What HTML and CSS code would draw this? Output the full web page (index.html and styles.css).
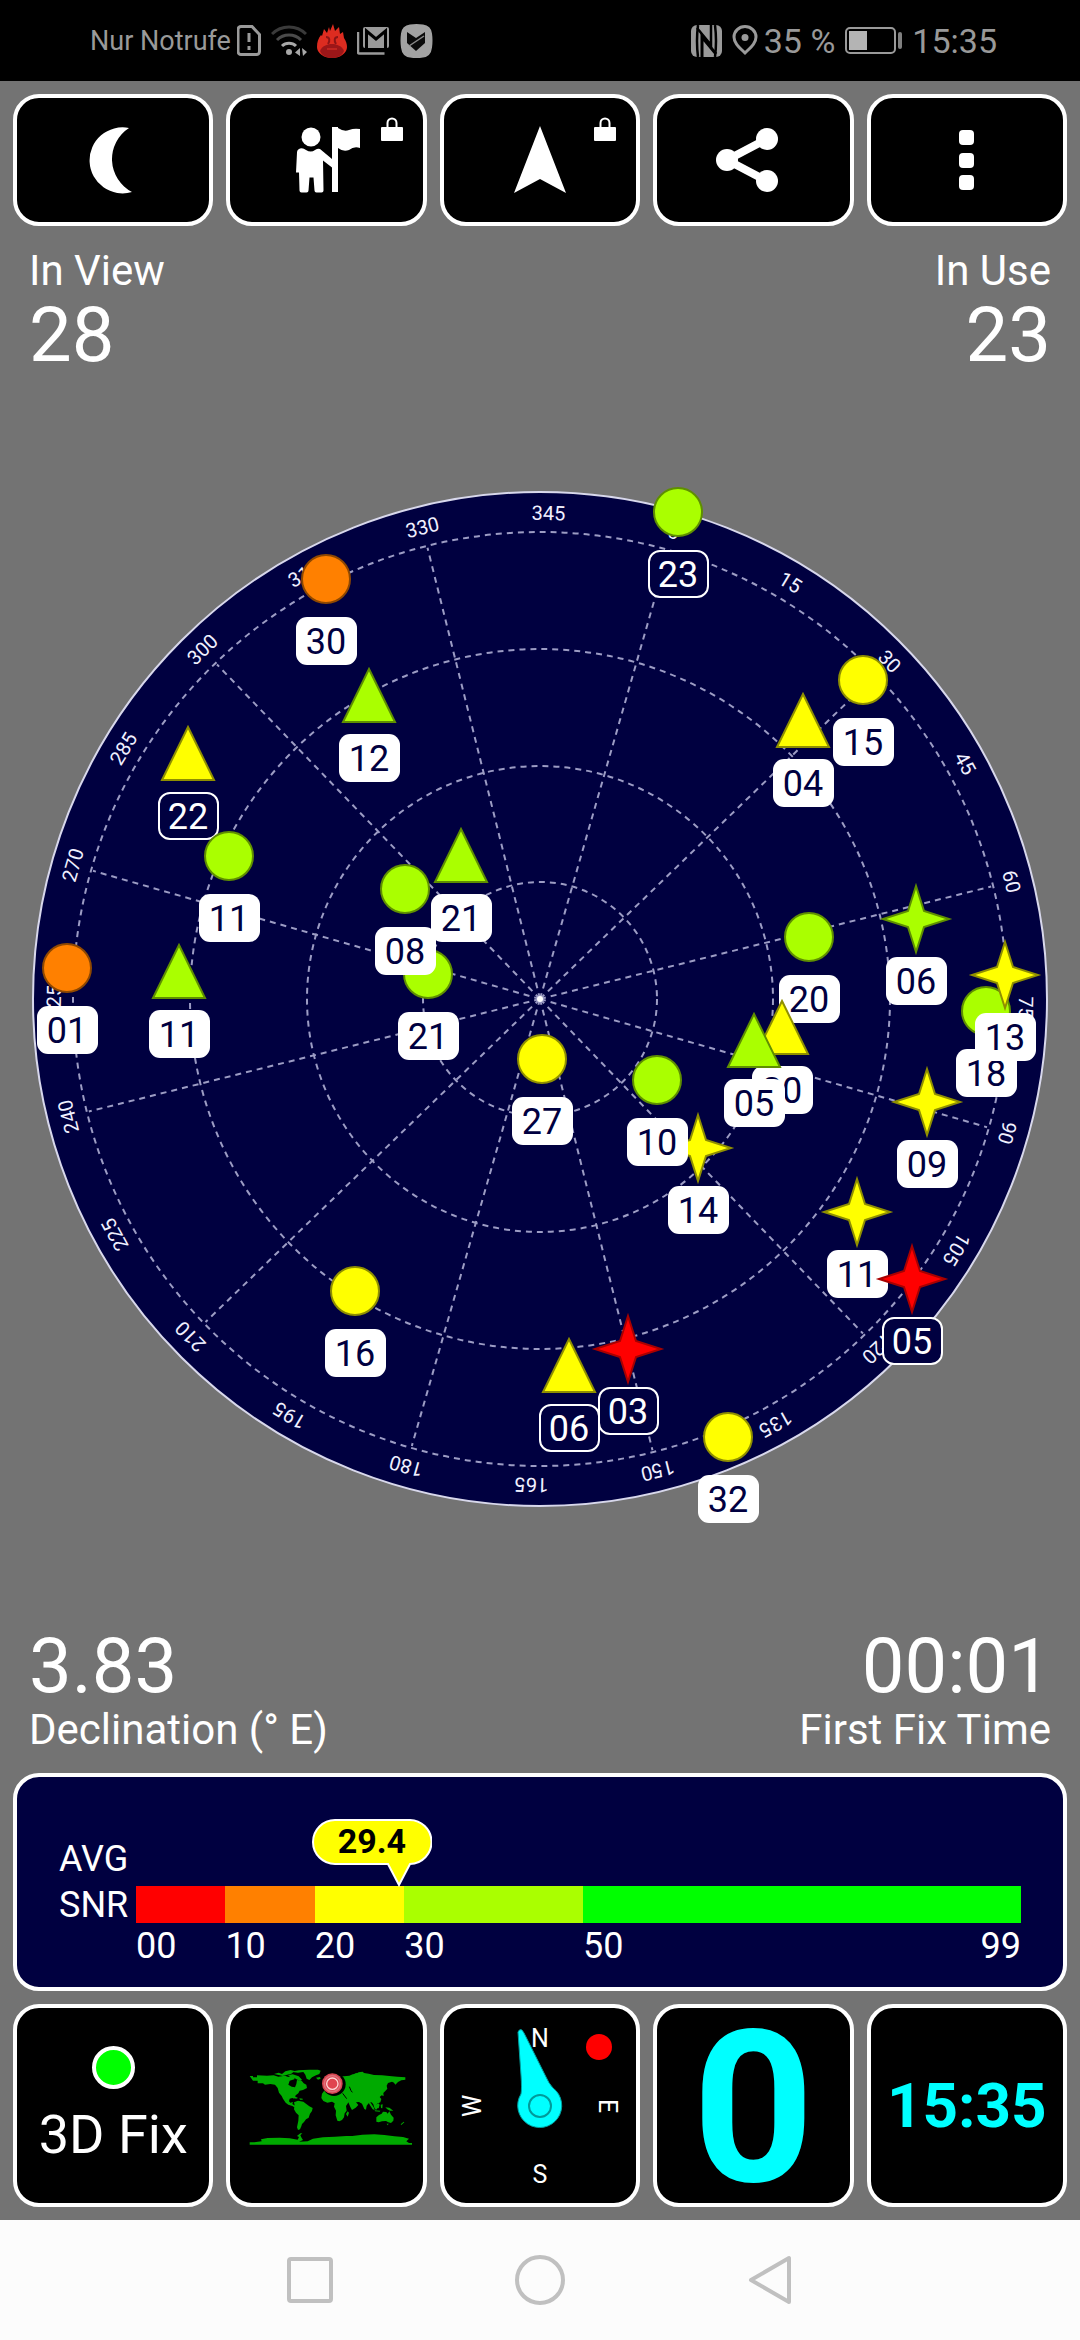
FILE: index.html
```html
<!DOCTYPE html>
<html lang="en">
<head>
<meta charset="utf-8">
<meta name="viewport" content="width=device-width, initial-scale=1">
<title>GPS Satellites</title>
<link rel="stylesheet" href="styles.css">
</head>
<body>
<div class="screen">
  <header class="status">
    <div class="status-side">
      <span class="carrier">Nur Notrufe</span>
      <div class="status-icons">
        <svg width="24" height="31" viewBox="0 0 24 31" fill="none" stroke="#9a9a9a" stroke-width="3"><path d="M4 1.5h11l7.500 8v17a3 3 0 0 1-3 3h-15.500a3 3 0 0 1-3-3v-22a3 3 0 0 1 3-3z"/><path d="M12 8v9M12 21v4"/></svg>
        <svg width="36" height="32" viewBox="0 0 36 32" fill="none" stroke-width="3"><path d="M1 9a24 24 0 0 1 34 0" stroke="#3a3a3a"/><path d="M6 15a17 17 0 0 1 24 0" stroke="#4a4a4a"/><path d="M11 21a10 10 0 0 1 14 0" stroke="#a8a8a8"/><circle cx="18" cy="27" r="3" fill="#a8a8a8"/><path d="M29 23v8l-5-3.500zM31 23l5 4-4 4z" fill="#a8a8a8"/></svg>
        <svg width="30" height="34" viewBox="0 0 30 34"><path d="M4 11l1 1 2-7 3 4 2-6 1 4 3-7 2 7 4-4 1 7 3-2 1 6c2 3 3 6 3 9a15 11 0 0 1-30 0c0-5 1-8 4-12z" fill="#dd2c20"/><path d="M3 27c2-5 7-7 12-7s10 2 12 7c-2 5-7 7-12 7s-10-2-12-7z" fill="#9c1618"/><path d="M9 13c4 0 4 4 2 7M21 13c-4 0-4 4-2 7" fill="none" stroke="#8c1416" stroke-width="2"/><path d="M10 25h10" stroke="#c02420" stroke-width="2"/></svg>
        <svg width="33" height="29" viewBox="0 0 33 29"><path d="M1 6v20a1.500 1.500 0 0 0 1.500 1.500h25" fill="none" stroke="#9a9a9a" stroke-width="2.500"/><rect x="6" y="1" width="26" height="21" rx="2" fill="#9a9a9a"/><path d="M9.500 22v-17l9.500 8 9.500-8v17" fill="none" stroke="#000" stroke-width="3"/></svg>
        <svg width="33" height="34" viewBox="0 0 33 34"><path d="M10 .5q6.500-1 13 0q8 1 9 9q1 7 0 14q-1 9-9 10q-6.500 1-13 0q-8-1-9-10q-1-7 0-14q1-8 9-9z" fill="#a2a2a2"/><path d="M7 8l9 6 9-6v11l-9 8-9-8z" fill="#0a0a0a"/><path d="M9 22l15-10" stroke="#8a8a8a" stroke-width="1.500"/></svg>
      </div>
    </div>
    <div class="status-side">
      <div class="status-icons">
        <svg width="31" height="32" viewBox="0 0 31 32"><rect width="31" height="32" rx="6" fill="#9a9a9a"/><path d="M7 0q-2 16 0 32M24 0q2 16 0 32" fill="none" stroke="#000" stroke-width="2.500"/><path d="M11 32v-20l14 17" fill="none" stroke="#000" stroke-width="3"/><path d="M20 0v20l-14-17" fill="none" stroke="#000" stroke-width="2.500"/></svg>
        <svg width="26" height="31" viewBox="0 0 26 31"><path d="M13 28c-6-6-11-10-11-16a11 10.500 0 0 1 22 0c0 6-5 10-11 16z" fill="none" stroke="#9a9a9a" stroke-width="3"/><circle cx="13" cy="12.500" r="3.500" fill="#9a9a9a"/></svg>
      </div>
      <span class="clock">35 %</span>
      <svg class="battery" width="57" height="27" viewBox="0 0 57 27"><rect x="1" y="1" width="49" height="25" rx="4" fill="none" stroke="#9a9a9a" stroke-width="2"/><rect x="4" y="4" width="18" height="19" fill="#b4b4b4"/><rect x="53" y="5" width="4" height="17" rx="2" fill="#808080"/></svg>
      <span class="clock">15:35</span>
    </div>
  </header>

  <main class="app">
    <nav class="toolbar">
      <button class="tool" type="button" aria-label="Night mode">
        <svg class="tool-icon" viewBox="-7 -7 80 80"><path d="M49 1A33 33 0 1 0 52 65A37 37 0 0 1 49 1z"/></svg>
      </button>
      <button class="tool" type="button" aria-label="Waypoint">
        <svg class="tool-icon" viewBox="-7 -7 80 80"><circle cx="17" cy="10" r="9.500"/><path d="M38 0h6v1q6 4 11 2t11-1v19q-6-2-11 2-6 2-11-2v44h-6z"/><path d="M6 21.500q3-1 6 1.500 5 3 9 0 3-2 5-1l12 10v8.500l-9-7 .500 30q0 2-2 2h-5q-2 0-2-2l-1-13h-4l-1 13q0 2-2 2h-5q-2 0-2-2l-.500-18h-3l1-20q0-3 3-4z"/></svg>
        <svg class="lock" viewBox="0 0 22 24"><rect y="10" width="22" height="14" rx="1"/><path d="M6.500 11v-5a4.500 4.500 0 0 1 9 0v5" fill="none" stroke="#fff" stroke-width="2"/></svg>
      </button>
      <button class="tool" type="button" aria-label="Navigate">
        <svg class="tool-icon" viewBox="-7 -7 80 80"><path d="M33-1L59 66L33 52L7 66z"/></svg>
        <svg class="lock" viewBox="0 0 22 24"><rect y="10" width="22" height="14" rx="1"/><path d="M6.500 11v-5a4.500 4.500 0 0 1 9 0v5" fill="none" stroke="#fff" stroke-width="2"/></svg>
      </button>
      <button class="tool" type="button" aria-label="Share">
        <svg class="tool-icon" viewBox="-7 -7 80 80"><circle cx="7" cy="33" r="11"/><circle cx="47" cy="12" r="11"/><circle cx="47" cy="54" r="11"/><path d="M47 12L7 33l40 21" fill="none" stroke="#fff" stroke-width="8"/></svg>
      </button>
      <button class="tool" type="button" aria-label="More options">
        <svg class="tool-icon" viewBox="-7 -7 80 80"><rect x="25" y="3" width="15" height="15" rx="4"/><rect x="25" y="26" width="15" height="15" rx="4"/><rect x="25" y="48" width="15" height="15" rx="4"/></svg>
      </button>
    </nav>

    <section class="stats">
      <div class="stat"><span class="stat-label">In View</span><span class="stat-value">28</span></div>
      <div class="stat stat-end"><span class="stat-label">In Use</span><span class="stat-value">23</span></div>
    </section>

    <section class="sky">
      <svg class="sky-plot" viewBox="0 459 1080 1064" role="img" aria-label="Sky view">
        <defs>
          <circle id="dot" r="24"/>
          <path id="tri" d="M0-27L26 26H-26z"/>
          <path id="star" d="M0-33L8-8L33 0L8 8L0 33L-8 8L-33 0L-8-8z"/>
          <rect id="tag" x="-30" y="38" width="61" height="48" rx="11"/>
          <rect id="ring" x="-29" y="39" width="59" height="46" rx="11"/>
        </defs>
        <g transform="translate(540 999)">
          <circle class="sky-disc" r="507"/>
          <g class="grid">
            <circle r="117"/><circle r="233"/><circle r="350"/><circle r="467"/>
            <g transform="rotate(16)">
              <path d="M0 0V-465M0 0V465M0 0H465M0 0H-465"/>
              <path transform="rotate(30)" d="M0 0V-465M0 0V465M0 0H465M0 0H-465"/>
              <path transform="rotate(60)" d="M0 0V-465M0 0V465M0 0H465M0 0H-465"/>
            </g>
          </g>
          <circle r="3" fill="#fff"/>
          <g class="azimuth" transform="rotate(16)">
            <text y="-479">0</text>
            <text y="-479" transform="rotate(15)">15</text>
            <text y="-479" transform="rotate(30)">30</text>
            <text y="-479" transform="rotate(45)">45</text>
            <text y="-479" transform="rotate(60)">60</text>
            <text y="-479" transform="rotate(75)">75</text>
            <text y="-479" transform="rotate(90)">90</text>
            <text y="-479" transform="rotate(105)">105</text>
            <text y="-479" transform="rotate(120)">120</text>
            <text y="-479" transform="rotate(135)">135</text>
            <text y="-479" transform="rotate(150)">150</text>
            <text y="-479" transform="rotate(165)">165</text>
            <text y="-479" transform="rotate(180)">180</text>
            <text y="-479" transform="rotate(195)">195</text>
            <text y="-479" transform="rotate(210)">210</text>
            <text y="-479" transform="rotate(225)">225</text>
            <text y="-479" transform="rotate(240)">240</text>
            <text y="-479" transform="rotate(255)">255</text>
            <text y="-479" transform="rotate(270)">270</text>
            <text y="-479" transform="rotate(285)">285</text>
            <text y="-479" transform="rotate(300)">300</text>
            <text y="-479" transform="rotate(315)">315</text>
            <text y="-479" transform="rotate(330)">330</text>
            <text y="-479" transform="rotate(345)">345</text>
          </g>
        </g>
        <g class="sats">
          <g class="lime unused" transform="translate(678 512)"><use href="#dot"/><use class="tag" href="#ring"/><text y="75">23</text></g>
          <g class="yellow" transform="translate(863 680)"><use href="#dot"/><use class="tag" href="#tag"/><text y="75">15</text></g>
          <g class="yellow" transform="translate(803 721)"><use href="#tri"/><use class="tag" href="#tag"/><text y="75">04</text></g>
          <g class="orange" transform="translate(326 579)"><use href="#dot"/><use class="tag" href="#tag"/><text y="75">30</text></g>
          <g class="lime" transform="translate(369 696)"><use href="#tri"/><use class="tag" href="#tag"/><text y="75">12</text></g>
          <g class="yellow unused" transform="translate(188 754)"><use href="#tri"/><use class="tag" href="#ring"/><text y="75">22</text></g>
          <g class="lime" transform="translate(229 856)"><use href="#dot"/><use class="tag" href="#tag"/><text y="75">11</text></g>
          <g class="lime" transform="translate(461 856)"><use href="#tri"/><use class="tag" href="#tag"/><text y="75">21</text></g>
          <g class="lime" transform="translate(428 974)"><use href="#dot"/><use class="tag" href="#tag"/><text y="75">21</text></g>
          <g class="lime" transform="translate(405 889)"><use href="#dot"/><use class="tag" href="#tag"/><text y="75">08</text></g>
          <g class="yellow" transform="translate(542 1059)"><use href="#dot"/><use class="tag" href="#tag"/><text y="75">27</text></g>
          <g class="orange" transform="translate(67 968)"><use href="#dot"/><use class="tag" href="#tag"/><text y="75">01</text></g>
          <g class="lime" transform="translate(179 972)"><use href="#tri"/><use class="tag" href="#tag"/><text y="75">11</text></g>
          <g class="lime" transform="translate(809 937)"><use href="#dot"/><use class="tag" href="#tag"/><text y="75">20</text></g>
          <g class="yellow" transform="translate(782 1028)"><use href="#tri"/><use class="tag" href="#tag"/><text y="75">20</text></g>
          <g class="lime" transform="translate(754 1041)"><use href="#tri"/><use class="tag" href="#tag"/><text y="75">05</text></g>
          <g class="lime" transform="translate(916 919)"><use href="#star"/><use class="tag" href="#tag"/><text y="75">06</text></g>
          <g class="lime" transform="translate(986 1011)"><use href="#dot"/><use class="tag" href="#tag"/><text y="75">18</text></g>
          <g class="yellow" transform="translate(1005 975)"><use href="#star"/><use class="tag" href="#tag"/><text y="75">13</text></g>
          <g class="yellow" transform="translate(927 1102)"><use href="#star"/><use class="tag" href="#tag"/><text y="75">09</text></g>
          <g class="yellow" transform="translate(698 1148)"><use href="#star"/><use class="tag" href="#tag"/><text y="75">14</text></g>
          <g class="lime" transform="translate(657 1080)"><use href="#dot"/><use class="tag" href="#tag"/><text y="75">10</text></g>
          <g class="yellow" transform="translate(857 1212)"><use href="#star"/><use class="tag" href="#tag"/><text y="75">11</text></g>
          <g class="red unused" transform="translate(912 1279)"><use href="#star"/><use class="tag" href="#ring"/><text y="75">05</text></g>
          <g class="yellow unused" transform="translate(569 1366)"><use href="#tri"/><use class="tag" href="#ring"/><text y="75">06</text></g>
          <g class="red unused" transform="translate(628 1349)"><use href="#star"/><use class="tag" href="#ring"/><text y="75">03</text></g>
          <g class="yellow" transform="translate(728 1437)"><use href="#dot"/><use class="tag" href="#tag"/><text y="75">32</text></g>
          <g class="yellow" transform="translate(355 1291)"><use href="#dot"/><use class="tag" href="#tag"/><text y="75">16</text></g>
        </g>
      </svg>
    </section>

    <section class="stats">
      <div class="stat"><span class="stat-value">3.83</span><span class="stat-label">Declination (° E)</span></div>
      <div class="stat stat-end"><span class="stat-value">00:01</span><span class="stat-label">First Fix Time</span></div>
    </section>

    <section class="snr">
      <div class="snr-name">AVG<br>SNR</div>
      <div class="snr-chart">
        <div class="snr-bar">
          <div class="seg-10 red-bg"></div>
          <div class="seg-10 orange-bg"></div>
          <div class="seg-10 yellow-bg"></div>
          <div class="seg-20 lime-bg"></div>
          <div class="seg-49 green-bg"></div>
          <div class="callout" style="left: 29.7%">
            <svg class="callout-shape" viewBox="0 0 120 68"><path d="M23 1H97A22 22 0 0 1 98 45L87 66L76 45H23A22 22 0 0 1 23 1z" fill="#ff0" stroke="#fff" stroke-width="2"/></svg>
            <span class="callout-text">29.4</span>
          </div>
        </div>
        <div class="snr-ticks">
          <span class="seg-10">00</span><span class="seg-10">10</span><span class="seg-10">20</span><span class="seg-20">30</span><span class="seg-49 tick-pair"><span>50</span><span>99</span></span>
        </div>
      </div>
    </section>

    <section class="tiles">
      <button class="tile fix" type="button"><span class="led"></span><span>3D Fix</span></button>
      <button class="tile" type="button" aria-label="World map">
        <svg width="170" height="100" viewBox="4 -14 510 300">
          <g fill="#00aa00">
            <path d="M27 46h10v4h12v-6l30 1 20-1 14 4 20-3 10 4 12-6 8 5-2 8-14 4-4 12 10 6 10 2 4-10 2-12 14 2 6 8 8 4 2 10-12 6-10 2-4 8-8 6-4 10-6-2-8 2-2 8 4 4 8-2-2 6 6 4 6 2 4 4-6 2-10-6-12-4-8-6-8-12-4-8-8-10-4-14-8-10-14-2-16 2-6-4h-16v-8h-14z"/>
            <path d="M100 40l14-4 10 4 10-8 16-4 12 3-10 8-12 3-14 4-12-3zM140 44l16-3 18 6 10 10-6 4-12-6-8-6z"/>
            <path d="M150 33l24-4 32-2h26l8 3-4 10-10 4-12 6-8 8-8-4-4-12-6-8-16 2zM226 51l12-2 2 5-8 3z"/>
            <path d="M150 104l10 2 12 6-6 2-12-5zM176 113l10 1v3h-8z"/>
            <path d="M160 125l12-5 16 3 8 6 10 8 10 5-2 9-6 8-4 12-8 5-6 8-6 6-2 7-4 9-6 2-3-8 4-20 1-16-8-8-6-10 2-12z"/>
            <path d="M244 99l6-8 14-6 16-1 8 6 12 2 8 2 2 14 6 8h12l-4 8-8 12 2 14-6 8-2 12-6 8-8 4-6-2-5-16 1-14-6-12 2-10-8-5-14 3-12-5-6-9zM316 160l5-8 4 4-4 12z"/>
            <path d="M246 78l14-5 10-10 14-2 12-14 14 0 16-2 10-4 12-2 6-4 12-2 4 4 14 2 16 4 24 1 22 2 24 2 24 2v7l-12 2-10 5-8 8-4-6-6-3-12 4-4 8 2 9-6 7-6 6 1 9-6-2-6 5 5 6-3 10-10 4-2 6 4 7-5 6-5-7-3-10-5-6-9 3-6 7-2 12-5-2-7-16-9-5-9 1 7 8-8 8-11 7-5-9-6-14-12-2-14-4-10-9-12 3-11 3z"/>
            <path d="M417 98l5-10 6 2-3 10-9 6z"/>
            <path d="M383 124l8 4 8 12 3 8-6-2-8-12zM405 133l8-5 4 4-3 11-8-1zM407 110l5 2 4 12-5-2zM420 132l6-1-1 12-4-1zM402 149l17 1-2 3-14-1zM434 140l12 1 12 9-10 0-8-4z"/>
            <path d="M407 170l8-7 8-4 4-6 10 1 4 5 5-7 5 10 8 9-1 9-7 7-8-2-7-4-12 1-10 3-7-2z"/>
            <path d="M438 189h6l-3 5zM480 191l9-8 2 2-9 8zM340 40l6-3 12-1-2 3z"/>
            <path d="M27 252v-7h14l22-3-2-6 20-4 36-1 30 2 24 4 4-8-6-3 10-8 6 0-6 6 4 8 4 6-12 5 26-1 16-8 30-4 36-2 34-2 18 0 30-4 36-1 30 2 30 4 26 2 18 5-8 8 8 5h12v5z"/>
          </g>
          <path d="M326 78l5 12 4 5M306 98l12 16" stroke="#000" stroke-width="3" fill="none"/>
          <circle cx="280" cy="71" r="35" fill="#000"/><circle cx="275" cy="69" r="31" fill="#d64550"/><circle cx="275" cy="69" r="24" fill="none" stroke="#e0707a" stroke-width="5"/><circle cx="275" cy="69" r="17" fill="#e0444f" stroke="#ffd6d6" stroke-width="4"/>
        </svg>
      </button>
      <button class="tile" type="button" aria-label="Compass">
        <svg class="compass" width="192" height="192" viewBox="-96 -96 192 192">
          <path d="M-22-74Q-19-80-15-71L5-31Q9-22 13-18A22 22 0 1 1-19-12Q-18-17-19-31z" fill="#0ff" stroke="#00a0a0"/>
          <circle r="11" fill="#0ff" stroke="#009a9a" stroke-width="2"/>
          <circle cx="59" cy="-59" r="13" fill="#f00"/>
          <text y="-59">N</text>
          <text y="-59" transform="rotate(90)">E</text>
          <text y="77">S</text>
          <text y="-59" transform="rotate(-90)">W</text>
        </svg>
      </button>
      <button class="tile speed" type="button">0</button>
      <button class="tile time" type="button">15:35</button>
    </section>
  </main>

  <nav class="navbar">
    <button class="nav-btn" type="button" aria-label="Recent apps"><svg width="52" height="52" viewBox="0 0 52 52"><rect x="5" y="5" width="42" height="42" rx="2"/></svg></button>
    <button class="nav-btn" type="button" aria-label="Home"><svg width="52" height="52" viewBox="0 0 52 52"><circle cx="26" cy="26" r="23"/></svg></button>
    <button class="nav-btn" type="button" aria-label="Back"><svg width="52" height="52" viewBox="0 0 52 52"><path d="M45 4V48L7 26z"/></svg></button>
  </nav>
</div>
</body>
</html>
```
FILE: styles.css
```css
* {
  box-sizing: border-box;
}

body {
  margin: 0;
  background: #737373;
  color: #fff;
  font-family: Roboto, "Noto Sans", sans-serif;
}

button {
  margin: 0;
  padding: 0;
  font: inherit;
  color: inherit;
}

svg {
  display: block;
  flex: none;
}

.screen {
  display: flex;
  flex-direction: column;
  min-height: 100vh;
}

/* System status bar */
.status {
  display: flex;
  justify-content: space-between;
  height: 81px;
  padding: 0 83px 0 90px;
  background: #000;
  color: #999;
}

.status-side {
  display: flex;
  align-items: center;
  gap: 6px;
}

.status-icons {
  display: flex;
  align-items: center;
  gap: 10px;
}

.carrier {
  font-size: 27px;
}

.clock {
  font-size: 34px;
}

.battery {
  margin: 0 4px;
}

/* App */
.app {
  display: flex;
  flex: 1;
  flex-direction: column;
  padding: 13px;
}

.toolbar,
.tiles {
  display: grid;
  grid-template-columns: repeat(5, 1fr);
  gap: 13px;
}

.tool,
.tile {
  position: relative;
  display: flex;
  align-items: center;
  justify-content: center;
  border: 4px solid #fff;
  border-radius: 26px;
  background: #000;
}

.tool {
  height: 132px;
}

.tool-icon {
  width: 80px;
  height: 80px;
  fill: #fff;
}

.lock {
  position: absolute;
  top: 19px;
  right: 20px;
  width: 22px;
  height: 24px;
  fill: #fff;
}

.stats {
  display: flex;
  justify-content: space-between;
  padding: 20px 16px 0;
}

.stat {
  display: flex;
  flex-direction: column;
  gap: 2px;
}

.stat-end {
  text-align: right;
}

.stat-label {
  font-size: 42px;
  line-height: 50px;
}

.stat-value {
  font-size: 76px;
  line-height: 74px;
}

/* Sky plot */
.sky {
  display: flex;
  flex: 1;
  align-items: center;
  margin: 0 -13px;
}

.sky-plot {
  width: 100%;
  overflow: visible;
}

.sky-disc {
  fill: #000040;
  stroke: #d8d8ec;
  stroke-width: 2px;
}

.grid {
  fill: none;
  stroke: #9c9cc4;
  stroke-width: 2px;
  stroke-dasharray: 6 5;
}

.azimuth {
  fill: #f0f0ff;
  font-size: 20px;
  text-anchor: middle;
}

.sats {
  font-size: 36px;
  text-anchor: middle;
  stroke-width: 2px;
}

.sats text {
  fill: #000040;
  stroke: none;
}

.sats .tag {
  fill: #fff;
  stroke: none;
}

.sats .unused text {
  fill: #fff;
}

.sats .unused .tag {
  fill: #000040;
  stroke: #fff;
}

.lime { fill: #aaff00; stroke: #5f8f00; }
.yellow { fill: #ffff00; stroke: #8f8f00; }
.orange { fill: #ff8000; stroke: #8f4800; }
.red { fill: #ff0000; stroke: #a80000; }

/* Signal strength */
.snr {
  display: grid;
  grid-template-columns: 77px 1fr;
  margin-top: 18px;
  padding: 59px 42px 20px;
  border: 4px solid #fff;
  border-radius: 26px;
  background: #000040;
  font-size: 36px;
}

.snr-name {
  line-height: 46px;
}

.snr-chart {
  padding-top: 50px;
}

.snr-bar {
  position: relative;
  display: flex;
  height: 37px;
}

.snr-ticks {
  display: flex;
  padding-top: 2px;
  line-height: 42px;
}

.seg-10 { flex: 10 0 0; }
.seg-20 { flex: 20 0 0; }
.seg-49 { flex: 49 0 0; }

.tick-pair {
  display: flex;
  justify-content: space-between;
}

.red-bg { background: #ff0000; }
.orange-bg { background: #ff8000; }
.yellow-bg { background: #ffff00; }
.lime-bg { background: #aaff00; }
.green-bg { background: #00ff00; }

.callout {
  position: absolute;
  bottom: 36px;
  width: 120px;
  height: 68px;
  margin-left: -87px;
}

.callout-shape {
  width: 120px;
  height: 68px;
}

.callout-text {
  position: absolute;
  top: 0;
  right: 0;
  left: 0;
  color: #000;
  font-size: 34px;
  font-weight: 700;
  line-height: 44px;
  text-align: center;
}

/* Tiles */
.tiles {
  margin-top: 13px;
}

.tile {
  height: 203px;
}

.fix {
  flex-direction: column;
  gap: 14px;
  font-size: 54px;
}

.led {
  width: 43px;
  height: 43px;
  border: 4px solid #fff;
  border-radius: 50%;
  background: #00ff00;
}

.compass {
  fill: #fff;
  font-size: 25px;
  text-anchor: middle;
}

.speed,
.time {
  color: #00ffff;
  font-weight: 700;
}

.speed {
  padding-top: 6px;
  font-size: 212px;
  line-height: 188px;
}

.time {
  font-size: 62px;
}

/* System navigation */
.navbar {
  display: flex;
  align-items: center;
  justify-content: center;
  gap: 150px;
  height: 120px;
  background: #fcfcfc;
}

.nav-btn {
  display: flex;
  align-items: center;
  justify-content: center;
  width: 80px;
  height: 80px;
  border: 0;
  background: none;
}

.nav-btn svg {
  fill: none;
  stroke: #c0c0c0;
  stroke-width: 4px;
  stroke-linejoin: round;
}
```
